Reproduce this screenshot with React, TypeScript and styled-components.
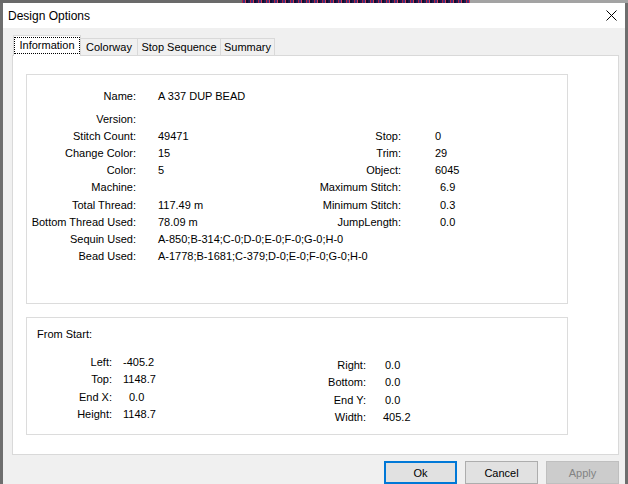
import React from 'react';
import styled, { createGlobalStyle } from 'styled-components';

const GlobalStyle = createGlobalStyle`
  *, *::before, *::after {
    box-sizing: border-box;
  }
  html, body {
    margin: 0;
    padding: 0;
    background: #6e6e6e;
  }
  body {
    font-family: "Liberation Sans", Arial, sans-serif;
    font-size: 11px;
    color: #000;
  }
`;

const Frame = styled.div`
  width: 628px;
  height: 484px;
  display: flex;
  flex-direction: column;
  overflow: hidden;
  background: #6e6e6e;
`;

// strip of desktop showing above the dialog
const TopEdge = styled.div`
  flex: none;
  height: 3px;
  background:
    linear-gradient(to right, #6a6a6a 0 242px, transparent 242px 470px, #a3a3a3 470px),
    repeating-linear-gradient(90deg, #1d1a4f 0 2px, #b5203c 2px 3px, #3b2a7a 3px 5px, #d4384f 5px 6px, #120e2e 6px 8px);
`;

const Window = styled.div`
  flex: 1;
  min-height: 0;
  margin: 0 3px;
  display: flex;
  flex-direction: column;
`;

const TitleBar = styled.div`
  flex: none;
  height: 25px;
  background: #fff;
  display: flex;
  align-items: center;
  justify-content: space-between;
  padding-left: 5px;
`;

const Title = styled.span`
  font-size: 12px;
`;

const CloseButton = styled.div`
  width: 27px;
  height: 25px;
  display: flex;
  align-items: center;
  justify-content: center;
`;

const Body = styled.div`
  flex: 1;
  background: #f0f0f0;
  padding: 8px 6px 0 9px;
  display: flex;
  flex-direction: column;
`;

const TabStrip = styled.div`
  display: flex;
  align-items: flex-end;
  height: 19px;
  padding-left: 1px;
`;

const Tab = styled.div<{ $width: number; $active?: boolean }>`
  width: ${({ $width }) => $width}px;
  height: ${({ $active }) => ($active ? '21px' : '17px')};
  margin-bottom: ${({ $active }) => ($active ? '-1px' : '0')};
  background: ${({ $active }) => ($active ? '#fff' : '#f0f0f0')};
  border-top: 1px solid #d9d9d9;
  border-right: 1px solid #d9d9d9;
  border-left: ${({ $active }) => ($active ? '1px solid #d9d9d9' : 'none')};
  position: relative;
  z-index: ${({ $active }) => ($active ? 1 : 0)};
  display: flex;
  align-items: center;
  justify-content: center;
  line-height: 15px;
  padding: ${({ $active }) => ($active ? '1px 0 2px' : '0')};
`;

const FocusRing = styled.span`
  flex: 1;
  align-self: stretch;
  border: 1px dotted #000;
  display: flex;
  align-items: center;
  justify-content: center;
`;

const Panel = styled.div`
  flex: none;
  height: 400px;
  background: #fff;
  border: 1px solid #d9d9d9;
  padding: 18px 50px 0 13px;
  display: flex;
  flex-direction: column;
  gap: 13px;
`;

const Group = styled.div<{ $height: number }>`
  height: ${({ $height }) => $height}px;
  border: 1px solid #dcdcdc;
`;

const InfoGrid = styled.div`
  display: grid;
  grid-template-columns: 109px 61px 160px 1fr;
  grid-template-rows: 22.6px;
  grid-auto-rows: 17.2px;
  column-gap: 22px;
  padding-top: 13px;
  align-items: start;
  line-height: 17px;
`;

const Label = styled.div`
  text-align: right;
  white-space: nowrap;
`;

const Value = styled.div<{ $indent?: number; $span?: boolean }>`
  padding-left: ${({ $indent }) => $indent ?? 0}px;
  grid-column: ${({ $span }) => ($span ? '2 / -1' : 'auto')};
  white-space: nowrap;
`;

const GroupHeading = styled.div`
  padding: 8px 0 0 10px;
  line-height: 17px;
`;

const Columns = styled.div`
  display: flex;
  gap: 103px;
  margin-top: 11px;
`;

const ExtentGrid = styled.div<{ $labelWidth: number; $gap: number; $offset?: number }>`
  display: grid;
  grid-template-columns: ${({ $labelWidth }) => $labelWidth}px 60px;
  grid-auto-rows: 17.4px;
  column-gap: ${({ $gap }) => $gap}px;
  margin-top: ${({ $offset }) => $offset ?? 0}px;
  line-height: 17px;
`;

const ButtonRow = styled.div`
  display: flex;
  justify-content: flex-end;
  gap: 8px;
  margin-top: 6px;
`;

const Button = styled.button<{ $variant?: 'default' | 'disabled' }>`
  width: 73px;
  height: 23px;
  font-family: inherit;
  font-size: 11px;
  padding: 0;
  background: ${({ $variant }) => ($variant === 'disabled' ? '#cccccc' : '#e1e1e1')};
  color: ${({ $variant }) => ($variant === 'disabled' ? '#838383' : '#000')};
  border: 1px solid
    ${({ $variant }) =>
      $variant === 'default' ? '#0078d7' : $variant === 'disabled' ? '#bfbfbf' : '#adadad'};
  box-shadow: ${({ $variant }) => ($variant === 'default' ? 'inset 0 0 0 1px #0078d7' : 'none')};
`;

const infoRows: [string, string, number?, string?, string?, number?][] = [
  ['Stitch Count:', '49471', 0, 'Stop:', '0', 12],
  ['Change Color:', '15', 0, 'Trim:', '29', 12],
  ['Color:', '5', 0, 'Object:', '6045', 12],
  ['Machine:', '', 0, 'Maximum Stitch:', '6.9', 17],
  ['Total Thread:', '117.49 m', 0, 'Minimum Stitch:', '0.3', 17],
  ['Bottom Thread Used:', '78.09 m', 0, 'JumpLength:', '0.0', 17],
];

const leftExtent: [string, string, number][] = [
  ['Left:', '-405.2', 0],
  ['Top:', '1148.7', 0],
  ['End X:', '0.0', 6],
  ['Height:', '1148.7', 0],
];

const rightExtent: [string, string, number][] = [
  ['Right:', '0.0', 2],
  ['Bottom:', '0.0', 2],
  ['End Y:', '0.0', 2],
  ['Width:', '405.2', 0],
];

const CloseIcon = () => (
  <svg width="11" height="11" viewBox="0 0 11 11">
    <path d="M0.5 0.5 L10.5 10.5 M10.5 0.5 L0.5 10.5" stroke="#000" strokeWidth="1" fill="none" />
  </svg>
);

const App: React.FC = () => {
  return (
    <>
      <GlobalStyle />
      <Frame>
        <TopEdge />
        <Window>
          <TitleBar>
            <Title>Design Options</Title>
            <CloseButton>
              <CloseIcon />
            </CloseButton>
          </TitleBar>
          <Body>
            <TabStrip>
              <Tab $width={68} $active>
                <FocusRing>Information</FocusRing>
              </Tab>
              <Tab $width={57}>Colorway</Tab>
              <Tab $width={83}>Stop Sequence</Tab>
              <Tab $width={54}>Summary</Tab>
            </TabStrip>
            <Panel>
              <Group $height={230}>
                <InfoGrid>
                  <Label>Name:</Label>
                  <Value $span>A 337 DUP BEAD</Value>
                  <Label>Version:</Label>
                  <Value $span />
                  {infoRows.map(([label, value, , rLabel, rValue, rIndent]) => (
                    <React.Fragment key={label}>
                      <Label>{label}</Label>
                      <Value>{value}</Value>
                      <Label>{rLabel}</Label>
                      <Value $indent={rIndent}>{rValue}</Value>
                    </React.Fragment>
                  ))}
                  <Label>Sequin Used:</Label>
                  <Value $span>A-850;B-314;C-0;D-0;E-0;F-0;G-0;H-0</Value>
                  <Label>Bead Used:</Label>
                  <Value $span>A-1778;B-1681;C-379;D-0;E-0;F-0;G-0;H-0</Value>
                </InfoGrid>
              </Group>
              <Group $height={118}>
                <GroupHeading>From Start:</GroupHeading>
                <Columns>
                  <ExtentGrid $labelWidth={85} $gap={11}>
                    {leftExtent.map(([label, value, indent]) => (
                      <React.Fragment key={label}>
                        <Label>{label}</Label>
                        <Value $indent={indent}>{value}</Value>
                      </React.Fragment>
                    ))}
                  </ExtentGrid>
                  <ExtentGrid $labelWidth={80} $gap={17} $offset={3}>
                    {rightExtent.map(([label, value, indent]) => (
                      <React.Fragment key={label}>
                        <Label>{label}</Label>
                        <Value $indent={indent}>{value}</Value>
                      </React.Fragment>
                    ))}
                  </ExtentGrid>
                </Columns>
              </Group>
            </Panel>
            <ButtonRow>
              <Button $variant="default">Ok</Button>
              <Button>Cancel</Button>
              <Button $variant="disabled">Apply</Button>
            </ButtonRow>
          </Body>
        </Window>
      </Frame>
    </>
  );
};

export default App;
